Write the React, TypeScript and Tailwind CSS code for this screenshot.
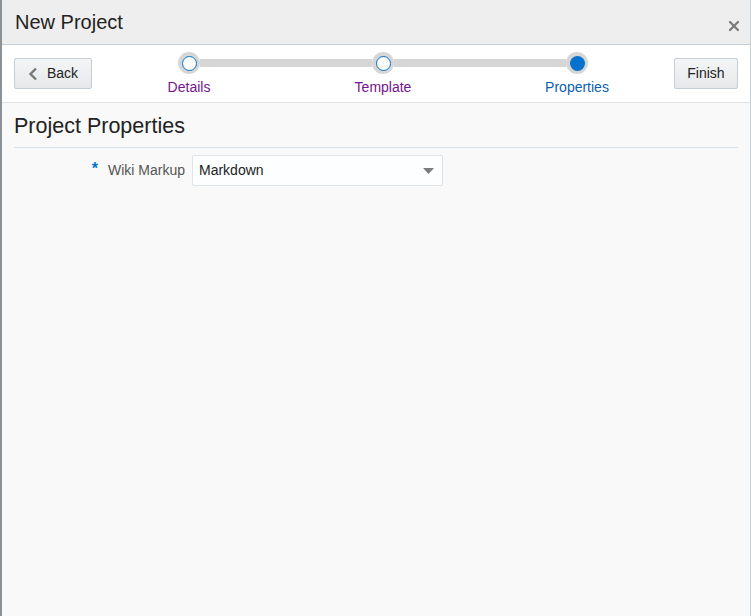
import React from 'react';

type Step = { label: string; state: 'visited' | 'current' };

const steps: Step[] = [
  { label: 'Details', state: 'visited' },
  { label: 'Template', state: 'visited' },
  { label: 'Properties', state: 'current' },
];

function TrainStop({ step, index }: { step: Step; index: number }) {
  const first = index === 0;
  const last = index === steps.length - 1;
  return (
    <div className="flex flex-col items-center">
      <div className="flex w-full items-center pt-[7px]">
        <div className={`h-[8px] flex-1 ${first ? 'bg-transparent' : 'bg-[#d6d6d6]'}`} />
        <div className="flex h-[22px] w-[22px] items-center justify-center rounded-full bg-[#d6d6d6]">
          {step.state === 'current' ? (
            <div className="h-[15px] w-[15px] rounded-full bg-[#0572ce]" />
          ) : (
            <div className="h-[15px] w-[15px] rounded-full border-[1.5px] border-[#0572ce] bg-white" />
          )}
        </div>
        <div className={`h-[8px] flex-1 ${last ? 'bg-transparent' : 'bg-[#d6d6d6]'}`} />
      </div>
      <span
        className={`mt-[5px] text-[14px] leading-[17px] ${
          step.state === 'current' ? 'text-[#0b5fb0]' : 'text-[#74148e]'
        }`}
      >
        {step.label}
      </span>
    </div>
  );
}

function Button({ children, className = '' }: { children: React.ReactNode; className?: string }) {
  return (
    <button
      className={`flex h-[31px] items-center rounded-[2px] border border-[#c4ced7] bg-gradient-to-b from-[#f4f5f6] to-[#e6e8ea] text-[14px] text-[#222] ${className}`}
    >
      {children}
    </button>
  );
}

export default function App() {
  return (
    <div
      className="flex h-[616px] w-[751px] flex-col border-l-2 border-r border-l-[#8c9196] border-r-[#c9ced3] bg-[#f9f9f9]"
      style={{ fontFamily: '"Liberation Sans", Arial, sans-serif' }}
    >
      {/* Header */}
      <div className="flex h-[45px] shrink-0 items-start justify-between border-b border-[#c6cfd7] bg-[#eeeeee] pl-[13px] pr-[10px]">
        <h1 className="mt-[10px] text-[20px] leading-[24px] text-[#222]">New Project</h1>
        <svg className="mt-[20px]" width="12" height="12" viewBox="0 0 12 12">
          <path d="M2 2 L10 10 M10 2 L2 10" stroke="#7a7a7a" strokeWidth="2.2" strokeLinecap="round" />
        </svg>
      </div>

      {/* Train */}
      <div className="flex h-[58px] shrink-0 border-b border-[#dfe3e6] bg-white pl-[12px] pr-[12px]">
        <Button className="mt-[13px] w-[78px] pl-[13px]">
          <svg width="10" height="14" viewBox="0 0 10 14" className="mr-[9px]">
            <path d="M8 1.5 L2.5 7 L8 12.5" fill="none" stroke="#777" strokeWidth="2.4" />
          </svg>
          Back
        </Button>
        <div className="grid flex-1 grid-cols-3">
          {steps.map((s, i) => (
            <TrainStop key={s.label} step={s} index={i} />
          ))}
        </div>
        <Button className="mt-[13px] w-[64px] justify-center">Finish</Button>
      </div>

      {/* Body */}
      <div className="flex flex-1 flex-col pl-[12px] pr-[12px]">
        <h2 className="mt-[9px] text-[21.5px] leading-[28px] text-[#222]">Project Properties</h2>
        <div className="mt-[7px] h-px bg-[#d9e0e6]" />
        <div className="mt-[7px] flex items-center">
          <label className="flex w-[171px] items-start justify-end text-[14px] text-[#555]">
            <span className="mr-[10px] -mt-[3px] text-[16px] font-bold text-[#0572ce]">*</span>
            Wiki Markup
          </label>
          <div className="ml-[7px] flex h-[31px] w-[251px] items-center justify-between rounded-[2px] border border-[#dfe4e7] bg-[#fdfeff] pl-[6px] pr-[8px] text-[14px] text-[#222]">
            <span>Markdown</span>
            <svg width="11" height="6" viewBox="0 0 11 6">
              <path d="M0 0 L11 0 L5.5 6 Z" fill="#7c7c7c" />
            </svg>
          </div>
        </div>
      </div>
    </div>
  );
}
